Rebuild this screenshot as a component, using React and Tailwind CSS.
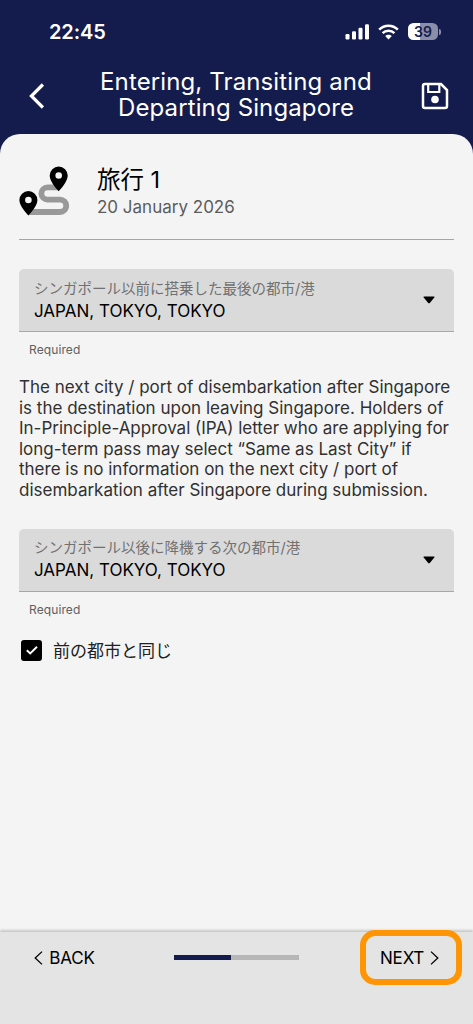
const japanese = "font-['Inter','Noto_Sans_CJK_JP',sans-serif]"

function StatusBar() {
  return (
    <div className="flex h-[63px] items-center pr-[32px] pl-[49px] text-white">
      <span className="text-[20px] leading-[24px] font-semibold tracking-[-0.1px]">22:45</span>
      <div className="ml-auto flex items-center">
        <svg width="25" height="16" viewBox="0 0 25 16" fill="currentColor">
          <rect x="0.5" y="10" width="4" height="5.5" rx="1.2" />
          <rect x="7" y="7.2" width="4" height="8.3" rx="1.2" />
          <rect x="13.5" y="3.7" width="4" height="11.8" rx="1.2" />
          <rect x="20" y="0.3" width="4" height="15.2" rx="1.2" />
        </svg>
        <svg className="ml-[8px]" width="21" height="16" viewBox="0 0 21 16" fill="none" stroke="currentColor" strokeWidth="2.5">
          <path d="M1.2 5.6 C6.3 0.4 14.7 0.4 19.8 5.6" />
          <path d="M4.6 9.2 C7.8 6 13.2 6 16.4 9.2" />
          <path d="M7.2 12 C9 10.2 12 10.2 13.8 12 L10.5 15.4 Z" fill="currentColor" stroke="none" />
        </svg>
        <div className="ml-[9px] flex h-[17px] w-[30px] items-center justify-center rounded-[5.5px] bg-linear-to-r from-white from-39% to-[#8b8da9] to-39% text-[14px] leading-none font-semibold text-[#141b4d]">
          39
        </div>
        <div className="ml-px h-[6px] w-[2px] rounded-r-full bg-[#8b8da9]" />
      </div>
    </div>
  )
}

function Header() {
  return (
    <header className="flex h-[71px] items-start pr-[24px] pl-[29px] text-white">
      <svg className="mt-[20px]" width="16" height="26" viewBox="0 0 16 26" fill="none" stroke="currentColor" strokeWidth="3.2">
        <path d="M13.9 1.5 L2.4 13 L13.9 24.5" />
      </svg>
      <h1 className="mt-[6px] flex-1 pl-[6px] text-center text-[24px] leading-[25.5px] tracking-[0.12px]">
        Entering, Transiting and
        <br />
        Departing Singapore
      </h1>
      <svg className="mt-[19px]" width="28" height="28" viewBox="0 0 28 28" fill="none" stroke="currentColor" strokeWidth="2.5">
        <path d="M4 2 H20 L26 8 V24 A2 2 0 0 1 24 26 H4 A2 2 0 0 1 2 24 V4 A2 2 0 0 1 4 2 Z" />
        <path d="M7.2 2 V10 H18.3 V2" strokeWidth="2.2" />
        <circle cx="14" cy="17.5" r="3.8" fill="currentColor" stroke="none" />
      </svg>
    </header>
  )
}

function RouteIcon() {
  return (
    <svg width="50" height="50" viewBox="0 0 50 50">
      <path d="M10 46 H41 A6.2 6.2 0 0 0 41 33.6 H28.5 A6.1 6.1 0 0 1 28.5 21.4 H39" fill="none" stroke="#999" strokeWidth="5.8" />
      <path
        fillRule="evenodd"
        d="M39.7 0.5 A9 9 0 0 0 30.7 9.5 C30.7 14.6 35.7 21 39.7 25.2 C43.7 21 48.7 14.6 48.7 9.5 A9 9 0 0 0 39.7 0.5 Z M39.7 6.2 A3.3 3.3 0 1 1 39.7 12.8 A3.3 3.3 0 1 1 39.7 6.2 Z"
      />
      <path
        fillRule="evenodd"
        d="M9.4 25 A9 9 0 0 0 0.4 34 C0.4 39.1 5.4 45.3 9.4 49.5 C13.4 45.3 18.4 39.1 18.4 34 A9 9 0 0 0 9.4 25 Z M9.4 30.7 A3.3 3.3 0 1 1 9.4 37.3 A3.3 3.3 0 1 1 9.4 30.7 Z"
      />
    </svg>
  )
}

function SelectField({ label, value }) {
  return (
    <div>
      <button
        type="button"
        className="flex h-[63px] w-full items-center rounded-t-[5px] border-b border-[#a4a6b8] bg-[#dadada] pr-[19px] pl-[15px] text-left"
      >
        <span className="flex-1">
          <span className={`block text-[14.5px] leading-[20px] whitespace-nowrap text-[#717171] ${japanese}`}>{label}</span>
          <span className="mt-px block text-[17px] leading-[22px] text-black">{value}</span>
        </span>
        <svg width="12" height="8" viewBox="0 0 12 8">
          <path d="M1.2 0.5 H10.8 Q12 0.5 11.3 1.6 L7 6.8 Q6 7.8 5 6.8 L0.7 1.6 Q0 0.5 1.2 0.5 Z" />
        </svg>
      </button>
      <p className="mt-[10px] pl-[10px] text-[12px] leading-[16px] tracking-[0.1px] text-[#606060]">Required</p>
    </div>
  )
}

function Footer() {
  return (
    <footer className="flex h-[92px] items-start bg-[#e4e4e4] text-[17px] text-black shadow-[0_-2px_2px_#c8cac7]">
      <button type="button" className="mt-[15px] ml-[34px] flex items-center gap-[6px] leading-[22px]">
        <svg width="9" height="14" viewBox="0 0 9 14" fill="none" stroke="currentColor" strokeWidth="1.3">
          <path d="M8 0.6 L1.2 7 L8 13.4" />
        </svg>
        <span className="w-[46px] tracking-[-0.2px]">BACK</span>
      </button>
      <div className="mt-[23px] ml-[79px] h-[5px] w-[125px] bg-[#b7b7b7]">
        <div className="h-full w-[57px] bg-[#141b4d]" />
      </div>
      <button
        type="button"
        className="mt-[-2px] ml-[61px] flex h-[55px] w-[102px] items-center rounded-[15px] border-[6px] border-[#ff9505] pl-[14px] leading-[22px]"
      >
        <span className="w-[44px] tracking-[-0.2px]">NEXT</span>
        <svg className="ml-[6px]" width="9" height="14" viewBox="0 0 9 14" fill="none" stroke="currentColor" strokeWidth="1.3">
          <path d="M1 0.6 L7.8 7 L1 13.4" />
        </svg>
      </button>
    </footer>
  )
}

export default function App() {
  return (
    <div className="flex h-[1024px] w-[473px] flex-col overflow-hidden bg-[#141b4d] font-['Inter','Noto_Sans_CJK_JP',sans-serif]">
      <StatusBar />
      <Header />
      <main className="flex-1 rounded-t-[20px] bg-[#f4f4f4] px-[19px] pt-[32px]">
        <section className="flex h-[74px] items-start border-b border-[#a5a5a5]">
          <RouteIcon />
          <div className="ml-[28px]">
            <h2 className="text-[23.5px] leading-[27px] text-black">旅行 1</h2>
            <p className="pt-px text-[17px] leading-[26px] text-[#5c5c5c]">20 January 2026</p>
          </div>
        </section>

        <div className="mt-[29px]">
          <SelectField label="シンガポール以前に搭乗した最後の都市/港" value="JAPAN, TOKYO, TOKYO" />
        </div>

        <p className="mt-[19px] text-[17px] leading-[20.6px] whitespace-nowrap text-[#303030]">
          The next city / port of disembarkation after Singapore
          <br />
          is the destination upon leaving Singapore. Holders of
          <br />
          In-Principle-Approval (IPA) letter who are applying for
          <br />
          long-term pass may select “Same as Last City” if
          <br />
          there is no information on the next city / port of
          <br />
          disembarkation after Singapore during submission.
        </p>

        <div className="mt-[28px]">
          <SelectField label="シンガポール以後に降機する次の都市/港" value="JAPAN, TOKYO, TOKYO" />
        </div>

        <label className="mt-[21px] flex items-center pl-[2px]">
          <span className="flex size-[21px] items-center justify-center rounded-[3px] bg-black">
            <svg width="12" height="9" viewBox="0 0 12 9" fill="none" stroke="white" strokeWidth="1.9">
              <path d="M0.8 4.3 L4.2 7.5 L11 0.8" />
            </svg>
          </span>
          <span className="ml-[11px] text-[17px] leading-[24px] text-[#202020]">前の都市と同じ</span>
        </label>
      </main>
      <Footer />
    </div>
  )
}
